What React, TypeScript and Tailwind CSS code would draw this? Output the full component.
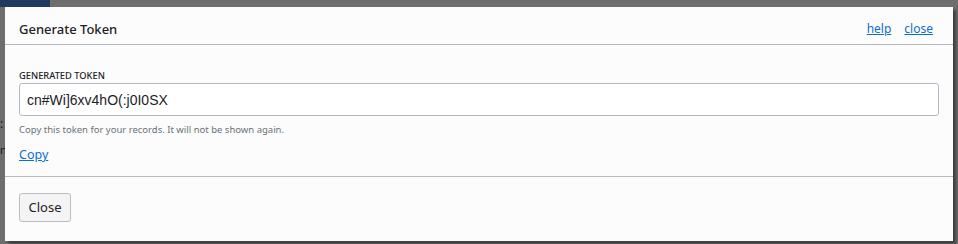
export default function App() {
  return (
    <div className="relative h-[244px] w-[958px] overflow-hidden bg-[#6e6e6e]" style={{ fontFamily: '"Noto Sans", "Open Sans", sans-serif' }}>
      {/* dimmed page behind the dialog */}
      <div className="absolute left-0 top-0 h-[7px] w-[50px] bg-[#1e3a5f]" />
      <div className="absolute left-0 top-[118px] text-[12px] leading-none text-[#1a1a1a]">:</div>
      <div className="absolute left-0 top-[144px] text-[11px] leading-none text-[#1a1a1a]">n</div>

      <div className="absolute left-[5px] top-[7px] w-[948px] bg-[#fcfcfc] shadow-[3px_3px_3px_rgba(0,0,0,0.45)]">
        <div className="flex h-[38px] items-end justify-between border-b border-[#b4bac4] px-[14px] pb-[6px]">
          <h2 className="text-[13px] font-medium leading-[18px] text-[#1d2327]">Generate Token</h2>
          <div className="flex gap-[13px] pr-[6px] text-[12px] leading-[18px]">
            <a href="#" className="text-[#0b6fd0] underline">help</a>
            <a href="#" className="text-[#0b6fd0] underline">close</a>
          </div>
        </div>

        <div className="border-b border-[#b4bac4] px-[14px] pb-[13px] pt-[25px]">
          <label className="block text-[9.3px] font-medium uppercase leading-[12px] text-[#1d2327]">Generated Token</label>
          <input
            readOnly
            value="cn#Wi]6xv4hO(:j0I0SX"
            className="mt-[1px] block h-[33px] w-[920px] rounded-[3px] border border-[#b4bac4] bg-white px-[7px] text-[14px] text-[#1d2327] outline-none"
            style={{ fontFamily: '"Liberation Sans", Arial, sans-serif' }}
          />
          <p className="mt-[8px] text-[9.5px] leading-[12px] text-[#6b7178]">Copy this token for your records. It will not be shown again.</p>
          <a href="#" className="mt-[11px] block w-fit text-[12.5px] leading-[16px] text-[#0b6fd0] underline">Copy</a>
        </div>

        <div className="px-[14px] pb-[19px] pt-[16px]">
          <button className="h-[29px] w-[52px] rounded-[3px] border border-[#b9bec6] bg-[#f4f4f4] text-[13px] text-[#1d2327]">Close</button>
        </div>
      </div>
    </div>
  );
}
